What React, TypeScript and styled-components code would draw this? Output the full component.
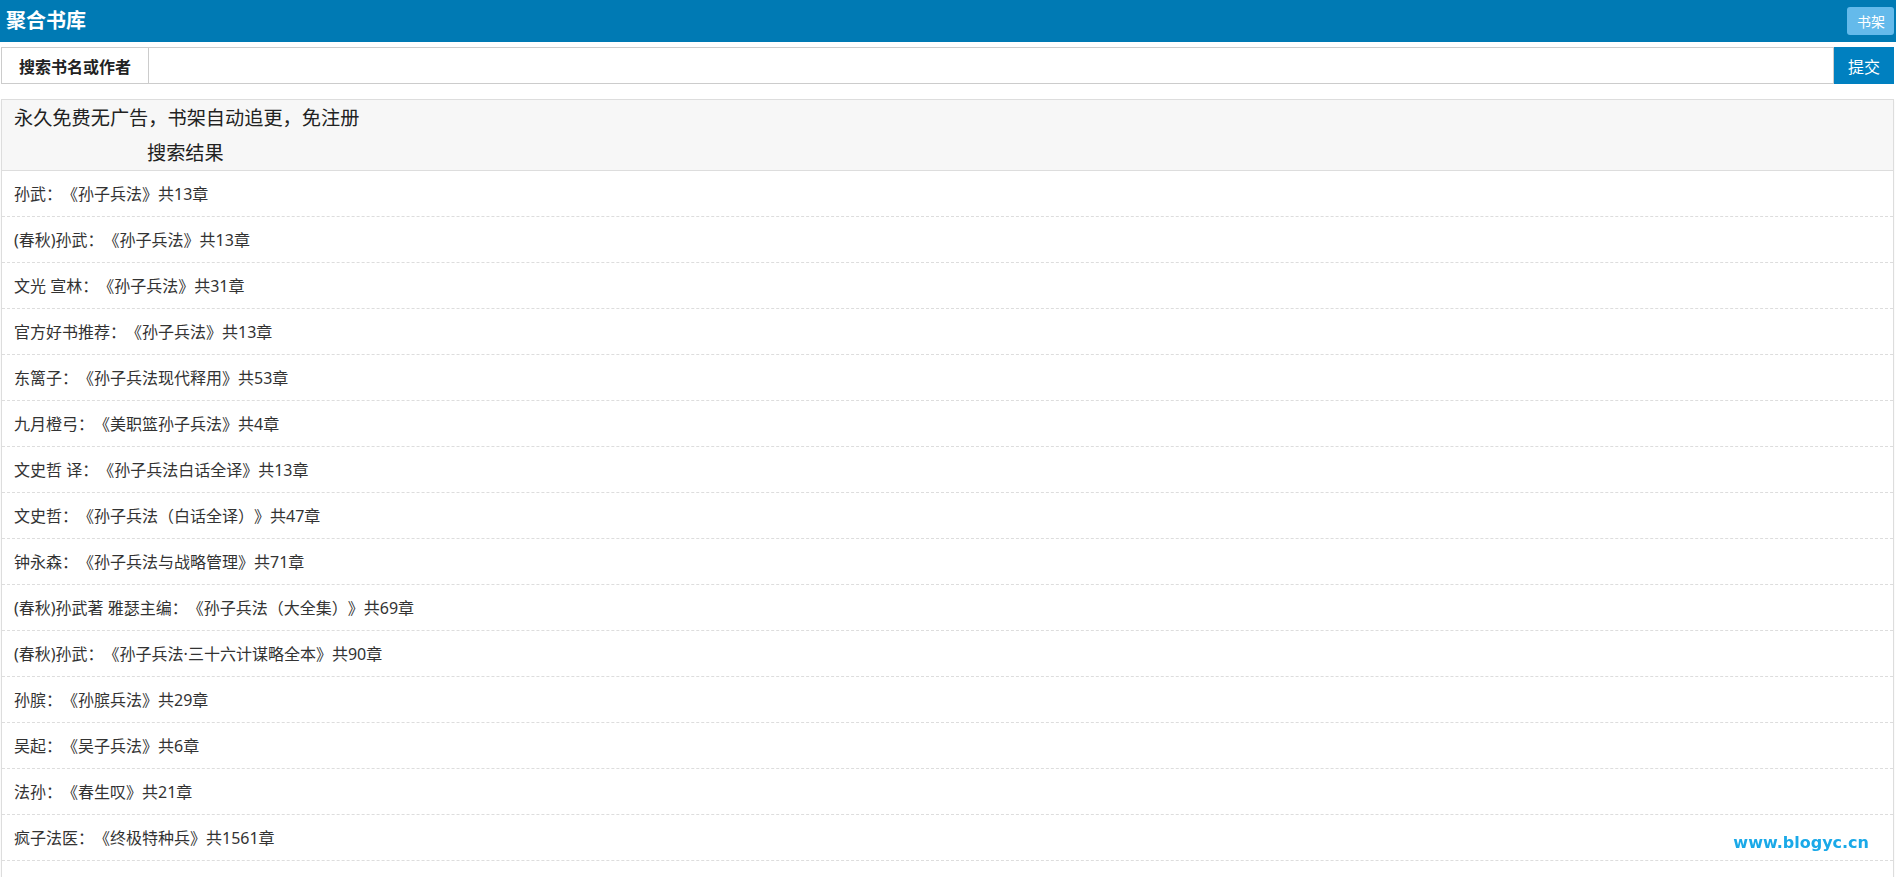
import React from 'react'
import styled, { createGlobalStyle } from 'styled-components'

const GlobalStyle = createGlobalStyle`
  html, body {
    margin: 0;
    padding: 0;
    overflow: hidden;
    background: #fff;
  }
  body {
    font-family: "Noto Sans", "Noto Sans CJK SC", "Liberation Sans", sans-serif;
    color: #333;
    text-spacing-trim: space-all;
  }
`

const TopNav = styled.div`
  height: 42px;
  background: #007ab4;
  display: flex;
  align-items: center;
  justify-content: space-between;
  padding: 0 2px 0 6px;
`

const SiteTitle = styled.div`
  color: #fff;
  font-size: 20px;
  font-weight: bold;
  line-height: 1;
`

const ShelfBtn = styled.button`
  height: 28px;
  padding: 0 9px 0 10px;
  border: none;
  border-radius: 3px;
  background: #64baeb;
  color: #fff;
  font-family: inherit;
  font-size: 14px;
  cursor: pointer;
`

const SearchRow = styled.form`
  display: flex;
  height: 37px;
  margin: 5px 2px 0 1px;
`

const SearchLabel = styled.span`
  display: flex;
  align-items: center;
  padding: 0 17px 0 17px;
  border: 1px solid #ccc;
  font-size: 16px;
  font-weight: bold;
  color: #222;
  box-sizing: border-box;
`

const SearchInput = styled.input`
  flex: 1;
  min-width: 0;
  border: 1px solid #ccc;
  border-left: none;
  outline: none;
  padding: 0 10px;
  font-family: inherit;
  font-size: 16px;
`

const SubmitBtn = styled.button`
  width: 60px;
  border: none;
  background: #0080c0;
  color: #fff;
  font-family: inherit;
  font-size: 16px;
  cursor: pointer;
`

const Panel = styled.div`
  margin: 15px 2px 0 1px;
  padding-bottom: 60px;
  border: 1px solid #ddd;
  box-shadow: 0 1px 2px rgba(0, 0, 0, 0.05);
`

const PanelHeading = styled.div`
  background: #f7f7f7;
  border-bottom: 1px solid #ddd;
  padding: 6px 12px 6px;
  font-size: 19.2px;
  line-height: 23px;
  color: #222;
`

const SubTitle = styled.div<{ indent: number }>`
  margin-top: 12px;
  padding-left: ${({ indent }) => indent}px;
`

const ResultRow = styled.div`
  height: 45px;
  line-height: 46px;
  padding: 0 12px;
  border-bottom: 1px dashed #ddd;
  font-size: 16px;
  color: #333;
  white-space: nowrap;
`

const Watermark = styled.div`
  position: fixed;
  right: 27px;
  bottom: 26px;
  color: #1aa9e8;
  font-family: "DejaVu Sans", sans-serif;
  font-weight: bold;
  font-size: 16px;
  line-height: 1;
`

const results = [
  '孙武：《孙子兵法》共13章',
  '(春秋)孙武：《孙子兵法》共13章',
  '文光 宣林：《孙子兵法》共31章',
  '官方好书推荐：《孙子兵法》共13章',
  '东篱子：《孙子兵法现代释用》共53章',
  '九月橙弓：《美职篮孙子兵法》共4章',
  '文史哲 译：《孙子兵法白话全译》共13章',
  '文史哲：《孙子兵法（白话全译）》共47章',
  '钟永森：《孙子兵法与战略管理》共71章',
  '(春秋)孙武著 雅瑟主编：《孙子兵法（大全集）》共69章',
  '(春秋)孙武：《孙子兵法·三十六计谋略全本》共90章',
  '孙膑：《孙膑兵法》共29章',
  '吴起：《吴子兵法》共6章',
  '法孙：《春生叹》共21章',
  '疯子法医：《终极特种兵》共1561章',
]

export default function App() {
  return (
    <>
      <GlobalStyle />
      <TopNav>
        <SiteTitle>聚合书库</SiteTitle>
        <ShelfBtn>书架</ShelfBtn>
      </TopNav>
      <SearchRow onSubmit={(e) => e.preventDefault()}>
        <SearchLabel>搜索书名或作者</SearchLabel>
        <SearchInput type="text" />
        <SubmitBtn type="submit">提交</SubmitBtn>
      </SearchRow>
      <Panel>
        <PanelHeading>
          永久免费无广告，书架自动追更，免注册
          <SubTitle indent={133}>搜索结果</SubTitle>
        </PanelHeading>
        {results.map((r, i) => (
          <ResultRow key={i}>{r}</ResultRow>
        ))}
      </Panel>
      <Watermark>www.blogyc.cn</Watermark>
    </>
  )
}
